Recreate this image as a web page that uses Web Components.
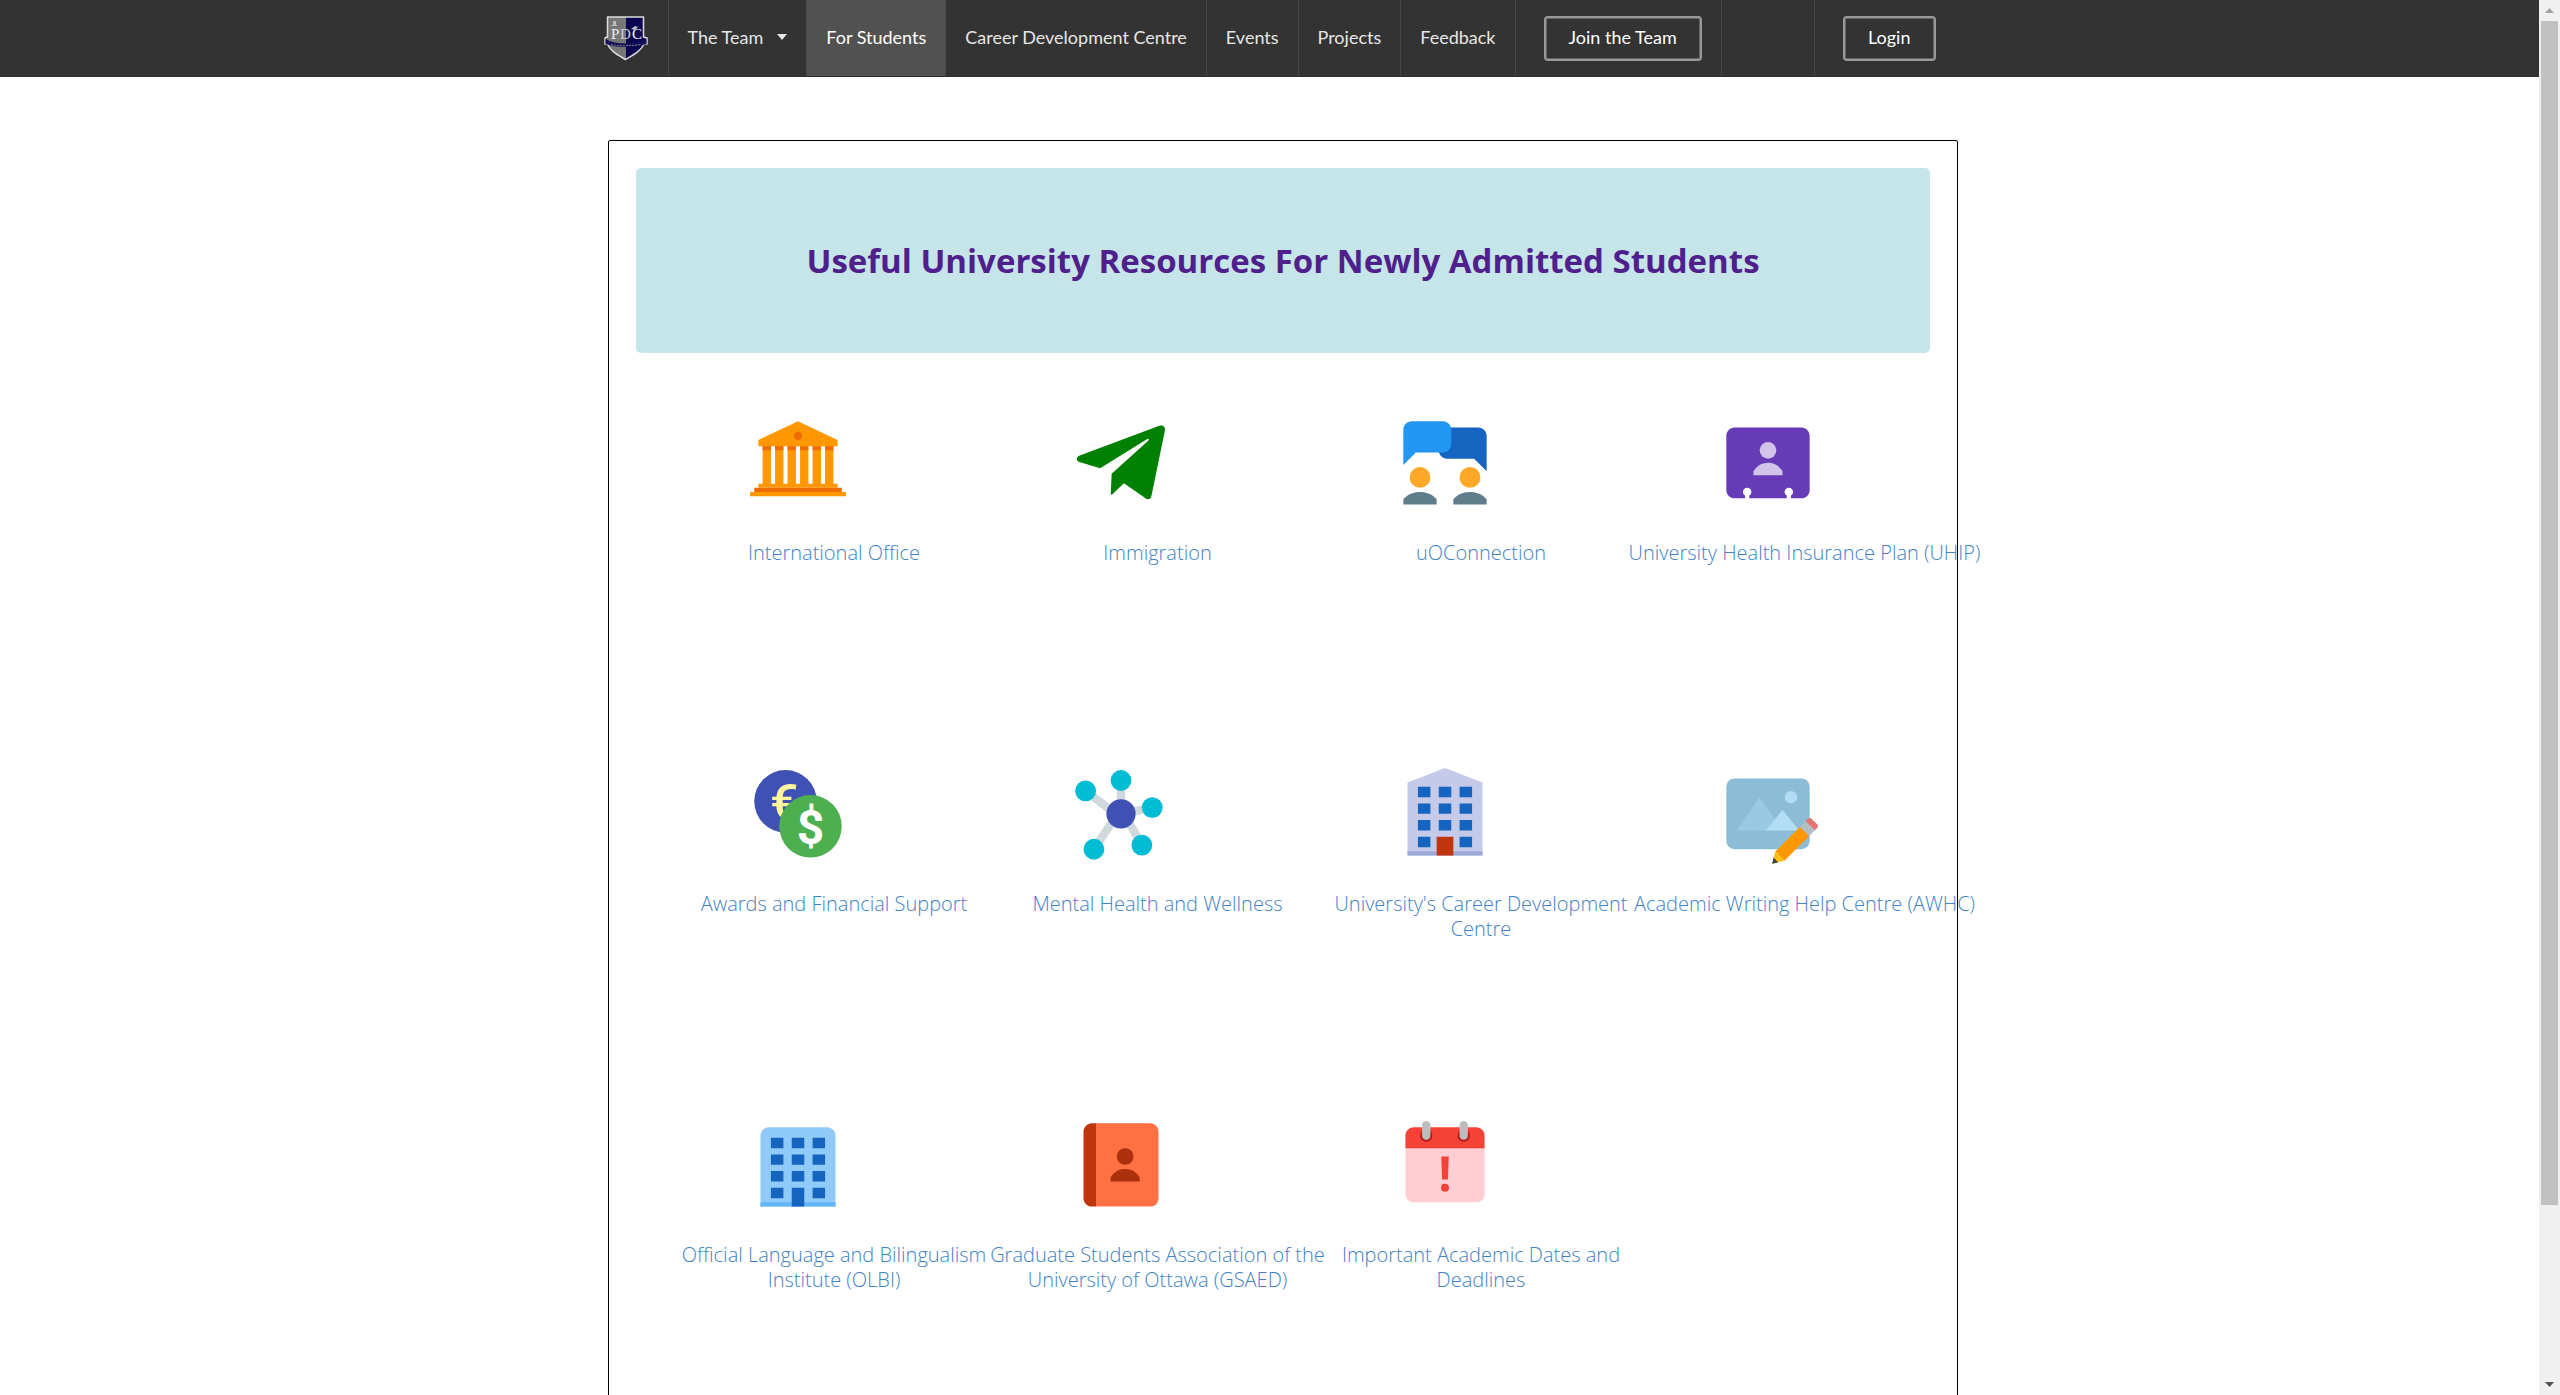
<!DOCTYPE html>
<html lang="en">
<head>
<meta charset="utf-8">
<title>For Students</title>
<style>
  body { margin: 0; height: 100vh; overflow: hidden; background: #fff; font-family: "Open Sans", "Noto Sans", sans-serif; }
</style>
</head>
<body>
<pdc-app></pdc-app>

<script>
const ICONS = {
  bank: `<path fill="#FF9800" d="M24 2L43 11V14H5V11zM5 32H43V34H5zM1 36H47V38H1zM7 14h4v18H7zM13 14h4v18h-4zM19 14h4v18h-4zM25 14h4v18h-4zM31 14h4v18h-4zM37 14h4v18h-4z"/>
    <path fill="#EF6C00" d="M3 34H45V36H3zM7 14h4v2H7zM13 14h4v2h-4zM19 14h4v2h-4zM25 14h4v2h-4zM31 14h4v2h-4zM37 14h4v2h-4z"/>
    <circle cx="24" cy="9" r="2" fill="#EF6C00"/>`,
  plane: `<path fill="#008000" d="M14 24.6L4 21.6C2.4 21 2.4 19.4 3.9 18.6L42.4 4.2C44.2 3.7 45.3 4.6 45.1 6.4L38.6 37.9C38.2 39.6 36.9 39.9 35.6 38.9L25.4 31.8L20 37C19.6 37.5 19.1 37.5 19.1 36.9L19.5 27.2L37.2 11.3C37.6 10.7 37.3 10.3 36.6 10.6z"/>`,
  talk: `<path fill="#1565C0" d="M40 5H25c-2.2 0-4 1.8-4 4v7c0 2.2 1.8 4 4 4h13l6 6V9c0-2.2-1.8-4-4-4z"/>
    <path fill="#2196F3" d="M8 2h15c2.2 0 4 1.8 4 4v7c0 2.2-1.8 4-4 4H10l-6 6V6c0-2.2 1.8-4 4-4z"/>
    <circle cx="12" cy="29" r="5" fill="#FFA726"/><circle cx="36" cy="29" r="5" fill="#FFA726"/>
    <path fill="#607D8B" d="M20 42v-2.400S17.700 36 12 36s-8 3.600-8 3.600V42zM44 42v-2.400S41.700 36 36 36s-8 3.600-8 3.600V42z"/>`,
  card: `<path fill="#673AB7" d="M40 5H8C5.800 5 4 6.800 4 9v26c0 2.200 1.800 4 4 4h5v-1.300a2 2 0 1 1 2 0V39h18v-1.300a2 2 0 1 1 2 0V39h5c2.200 0 4-1.800 4-4V9c0-2.200-1.800-4-4-4z"/>
    <circle cx="24" cy="16" r="4" fill="#D1C4E9"/><path fill="#D1C4E9" d="M31 28v-1.800S29 22 24 22s-7 4.200-7 4.200V28z"/>`,
  money: `<circle cx="18" cy="16" r="15" fill="#3F51B5"/>
    <text x="10.500" y="25" font-family="Roboto, sans-serif" font-weight="500" font-size="24" fill="#FFF59D">€</text>
    <circle cx="30" cy="28" r="15" fill="#4CAF50"/>
    <text x="30" y="36.500" text-anchor="middle" font-family="Roboto, sans-serif" font-weight="700" font-size="23" fill="#fff">$</text>`,
  mind: `<path stroke="#CFD8DC" stroke-width="4" fill="none" d="M7 11L24 24M24 6V22M39 19L24 22M34 37L25 21M11 39L23 21"/>
    <g fill="#00BCD4"><circle cx="7" cy="11" r="5"/><circle cx="24" cy="6" r="5"/><circle cx="39" cy="19" r="5"/><circle cx="34" cy="37" r="5"/><circle cx="11" cy="39" r="5"/></g>
    <circle cx="24" cy="22" r="7" fill="#3F51B5"/>`,
  campus: `<path fill="#C5CAE9" d="M42 42H6V7L24 0L42 7z"/><path fill="#9FA8DA" d="M6 40H42V42H6z"/>
    <path fill="#BF360C" d="M20 33h8v9h-8z"/>
    <path fill="#1565C0" d="M11 9h6v5h-6zM21 9h6v5h-6zM31 9h6v5h-6zM11 17h6v5h-6zM21 17h6v5h-6zM31 17h6v5h-6zM11 25h6v5h-6zM21 25h6v5h-6zM31 25h6v5h-6zM11 33h6v5h-6zM31 33h6v5h-6z"/>`,
  edit: `<rect x="4" y="5" width="40" height="34" rx="4" fill="#8CBCD6"/>
    <circle cx="35" cy="14" r="3" fill="#B3DDF5"/><path fill="#9AC9E3" d="M20 14L9 30H31z"/><path fill="#B3DDF5" d="M31 20L23 30H39z"/>
    <g transform="translate(0 -2)"><path fill="#E57373" d="M47.700 29.100l-2.800-2.800c-.4-.4-1.100-.4-1.600 0L42 27.600l4.400 4.400 1.300-1.300c.4-.4.4-1.100 0-1.600z"/>
    <path fill="#FF9800" d="M27.500 42.100L39.400 30.200L43.800 34.600L31.900 46.500z"/><path fill="#B0BEC5" d="M39.400 30.200L42 27.600L46.400 32L43.800 34.600z"/>
    <path fill="#FFC107" d="M27.500 42.100L26 48L31.900 46.500z"/><path fill="#37474F" d="M26.700 45L26 48L28.900 47.300z"/></g>`,
  office: `<path fill="#90CAF9" d="M42 42H6V8c0-2.200 1.800-4 4-4h28c2.200 0 4 1.800 4 4z"/><path fill="#64B5F6" d="M6 40H42V42H6z"/>
    <path fill="#1565C0" d="M11 9h6v5h-6zM21 9h6v5h-6zM31 9h6v5h-6zM11 17h6v5h-6zM21 17h6v5h-6zM31 17h6v5h-6zM11 25h6v5h-6zM21 25h6v5h-6zM31 25h6v5h-6zM11 33h6v5h-6zM31 33h6v5h-6zM21 33h6v9h-6z"/>`,
  book: `<path fill="#FF7043" d="M38 42H12V2h26c2.200 0 4 1.800 4 4v32c0 2.200-1.800 4-4 4z"/><path fill="#BF360C" d="M10 2h2v40h-2c-2.200 0-4-1.800-4-4V6c0-2.200 1.800-4 4-4z"/>
    <circle cx="26" cy="18" r="4" fill="#AB300B"/><path fill="#AB300B" d="M33 30v-1.900S31 24 26 24s-7 4.100-7 4.100V30z"/>`,
  calendar: `<path fill="#FFCDD2" d="M5 36V13H43V36c0 2.200-1.800 4-4 4H9c-2.200 0-4-1.800-4-4z"/>
    <path fill="#F44336" d="M43 8v6H5V8c0-2.200 1.800-4 4-4h30c2.200 0 4 1.800 4 4z"/>
    <circle cx="15" cy="8" r="3" fill="#B71C1C"/><circle cx="33" cy="8" r="3" fill="#B71C1C"/>
    <rect x="13" y="1" width="4" height="9" rx="2" fill="#BDBDBD"/><rect x="31" y="1" width="4" height="9" rx="2" fill="#BDBDBD"/>
    <path fill="#F44336" d="M22.200 18H25.800L25.400 29H22.600z"/><circle cx="24" cy="33" r="1.900" fill="#F44336"/>`
};

class PdcElement extends HTMLElement {
  constructor() {
    super();
    this.attachShadow({ mode: "open" });
  }
  connectedCallback() {
    this.shadowRoot.innerHTML = this.render();
  }
}

customElements.define("pdc-logo", class extends PdcElement {
  render() {
    return `<style>
      :host { display: block; width: 45px; height: 45px; }
      svg { display: block; }
    </style>
    <svg width="45" height="45" viewBox="0 0 45 45" role="img" aria-label="PDC">
      <path fill="#777" d="M3 1H22V44C14 39 6 35 3 27V22L1 21L3 20z"/>
      <path fill="#0b0450" d="M22 1H40V20L43 22L40 25C39 34 30 39 22 44z"/>
      <path fill="none" stroke="#ddd" stroke-width="1.500" stroke-linejoin="round" d="M3.500 21V1H39.500V21L43 22V28H40C37 35 29 39 21.500 43.500C14 39 6 35 3.500 28H1V22z"/>
      <path fill="#15105c" d="M1.500 23C12 29 31 29 42.500 23V28C31 32 12 32 1.500 28z"/>
      <path stroke="#777" stroke-width="1" fill="none" stroke-dasharray="2 1" d="M7 28.500C15 30 28 30 37 28.500"/>
      <path fill="#bbb" d="M9 5h3v4h1v1H7V9h2zM27 13l4-3 3 1-3 3z"/>
      <g font-family="Liberation Serif, serif" font-size="15"><text x="7" y="23" fill="#eee">P</text><text x="16" y="23" fill="#ccc">D</text><text x="28" y="23" fill="#fff">C</text></g>
    </svg>`;
  }
});

customElements.define("pdc-nav-item", class extends PdcElement {
  render() {
    const caret = this.hasAttribute("menu") ? `<svg width="10" height="6" viewBox="0 0 10 6"><path fill="currentColor" d="M0 0H10L5 6z"/></svg>` : "";
    return `<style>
      :host { display: flex; border-right: 1px solid #474747; color: #e6e6e6; }
      :host([active]) { background: #515151; color: #fff; }
      a { display: flex; align-items: center; gap: 14px; padding: 0 19px 2px; color: inherit; text-decoration: none; white-space: nowrap; }
    </style><a href="#"><slot></slot>${caret}</a>`;
  }
});

customElements.define("pdc-nav-button", class extends PdcElement {
  render() {
    return `<style>
      :host { display: flex; align-items: center; padding: 0 19px 0 28px; }
      :host([divided]) { border-right: 1px solid #474747; }
      button { box-sizing: border-box; height: 45px; padding: 0 23px 2px; border: 2px solid #999; border-radius: 4px; box-shadow: inset 0 0 0 1px #666; background: none; color: #fff; font: inherit; white-space: nowrap; }
    </style><button type="button"><slot></slot></button>`;
  }
});

customElements.define("pdc-navbar", class extends PdcElement {
  render() {
    return `<style>
      :host { display: block; background: #333; font: 18px/24px Lato, sans-serif; border-bottom: 1px solid #2b2b2b; }
      nav { display: flex; align-items: stretch; width: 1370px; max-width: 100%; height: 76px; margin: 0 auto; }
      .brand { display: flex; align-items: center; padding: 0 19px; border-right: 1px solid #474747; }
      .spacer { flex: 1; border-right: 1px solid #474747; }
    </style>
    <nav>
      <a class="brand" href="#"><pdc-logo></pdc-logo></a>
      <pdc-nav-item menu>The Team</pdc-nav-item>
      <pdc-nav-item active>For Students</pdc-nav-item>
      <pdc-nav-item>Career Development Centre</pdc-nav-item>
      <pdc-nav-item>Events</pdc-nav-item>
      <pdc-nav-item>Projects</pdc-nav-item>
      <pdc-nav-item>Feedback</pdc-nav-item>
      <pdc-nav-button divided>Join the Team</pdc-nav-button>
      <div class="spacer"></div>
      <pdc-nav-button>Login</pdc-nav-button>
    </nav>`;
  }
});

customElements.define("pdc-resource", class extends PdcElement {
  render() {
    return `<style>
      :host { display: flex; flex-direction: column; height: 351px; min-width: 0; }
      svg { display: block; width: 100px; height: 100px; margin: 0 auto 23px; }
      a { display: block; width: 356px; margin-left: 20px; text-align: center; text-decoration: none; color: #4183c4; font-size: 20px; line-height: 25px; font-weight: 300; }
    </style>
    <svg viewBox="0 0 48 48" aria-hidden="true">${ICONS[this.getAttribute("icon")]}</svg>
    <a href="#"><slot></slot></a>`;
  }
});

customElements.define("pdc-banner", class extends PdcElement {
  render() {
    return `<style>
      :host { display: flex; align-items: center; justify-content: center; height: 185px; border-radius: 5px; background: #c6e5e8; }
      h1 { margin: 0; color: #501f8e; font-size: 33px; line-height: 44px; font-weight: 700; }
    </style><h1><slot></slot></h1>`;
  }
});

customElements.define("pdc-scrollbar", class extends PdcElement {
  render() {
    return `<style>
      :host { display: flex; flex-direction: column; width: 21px; background: #f0f0f0; }
      .end { display: flex; height: 21px; align-items: center; justify-content: center; }
      .thumb { flex: 7; margin: 0 2px; background: #c1c1c1; }
      .rest { flex: 1; }
    </style>
    <div class="end"><svg width="9" height="5"><path fill="#a3a3a3" d="M0 5L4.500 0L9 5z"/></svg></div>
    <div class="thumb"></div><div class="rest"></div>
    <div class="end"><svg width="9" height="5"><path fill="#505050" d="M0 0H9L4.500 5z"/></svg></div>`;
  }
});

customElements.define("pdc-app", class extends PdcElement {
  render() {
    return `<style>
      :host { display: flex; height: 100%; }
      .page { flex: 1; min-width: 0; overflow: hidden; }
      main { display: flex; justify-content: center; padding: 63px 0 0 27px; }
      section { box-sizing: border-box; width: 1350px; max-width: 100%; padding: 27px; border: 1px solid #000; border-radius: 2px; }
      .grid { display: grid; grid-template-columns: repeat(4, minmax(0, 1fr)); margin-top: 64px; }
    </style>
    <div class="page">
      <pdc-navbar></pdc-navbar>
      <main><section>
        <pdc-banner>Useful University Resources For Newly Admitted Students</pdc-banner>
        <div class="grid">
          <pdc-resource icon="bank">International Office</pdc-resource>
          <pdc-resource icon="plane">Immigration</pdc-resource>
          <pdc-resource icon="talk">uOConnection</pdc-resource>
          <pdc-resource icon="card">University Health Insurance Plan (UHIP)</pdc-resource>
          <pdc-resource icon="money">Awards and Financial Support</pdc-resource>
          <pdc-resource icon="mind">Mental Health and Wellness</pdc-resource>
          <pdc-resource icon="campus">University's Career Development Centre</pdc-resource>
          <pdc-resource icon="edit">Academic Writing Help Centre (AWHC)</pdc-resource>
          <pdc-resource icon="office">Official Language and Bilingualism Institute (OLBI)</pdc-resource>
          <pdc-resource icon="book">Graduate Students Association of the University of Ottawa (GSAED)</pdc-resource>
          <pdc-resource icon="calendar">Important Academic Dates and Deadlines</pdc-resource>
        </div>
      </section></main>
    </div>
    <pdc-scrollbar></pdc-scrollbar>`;
  }
});
</script>
</body>
</html>
